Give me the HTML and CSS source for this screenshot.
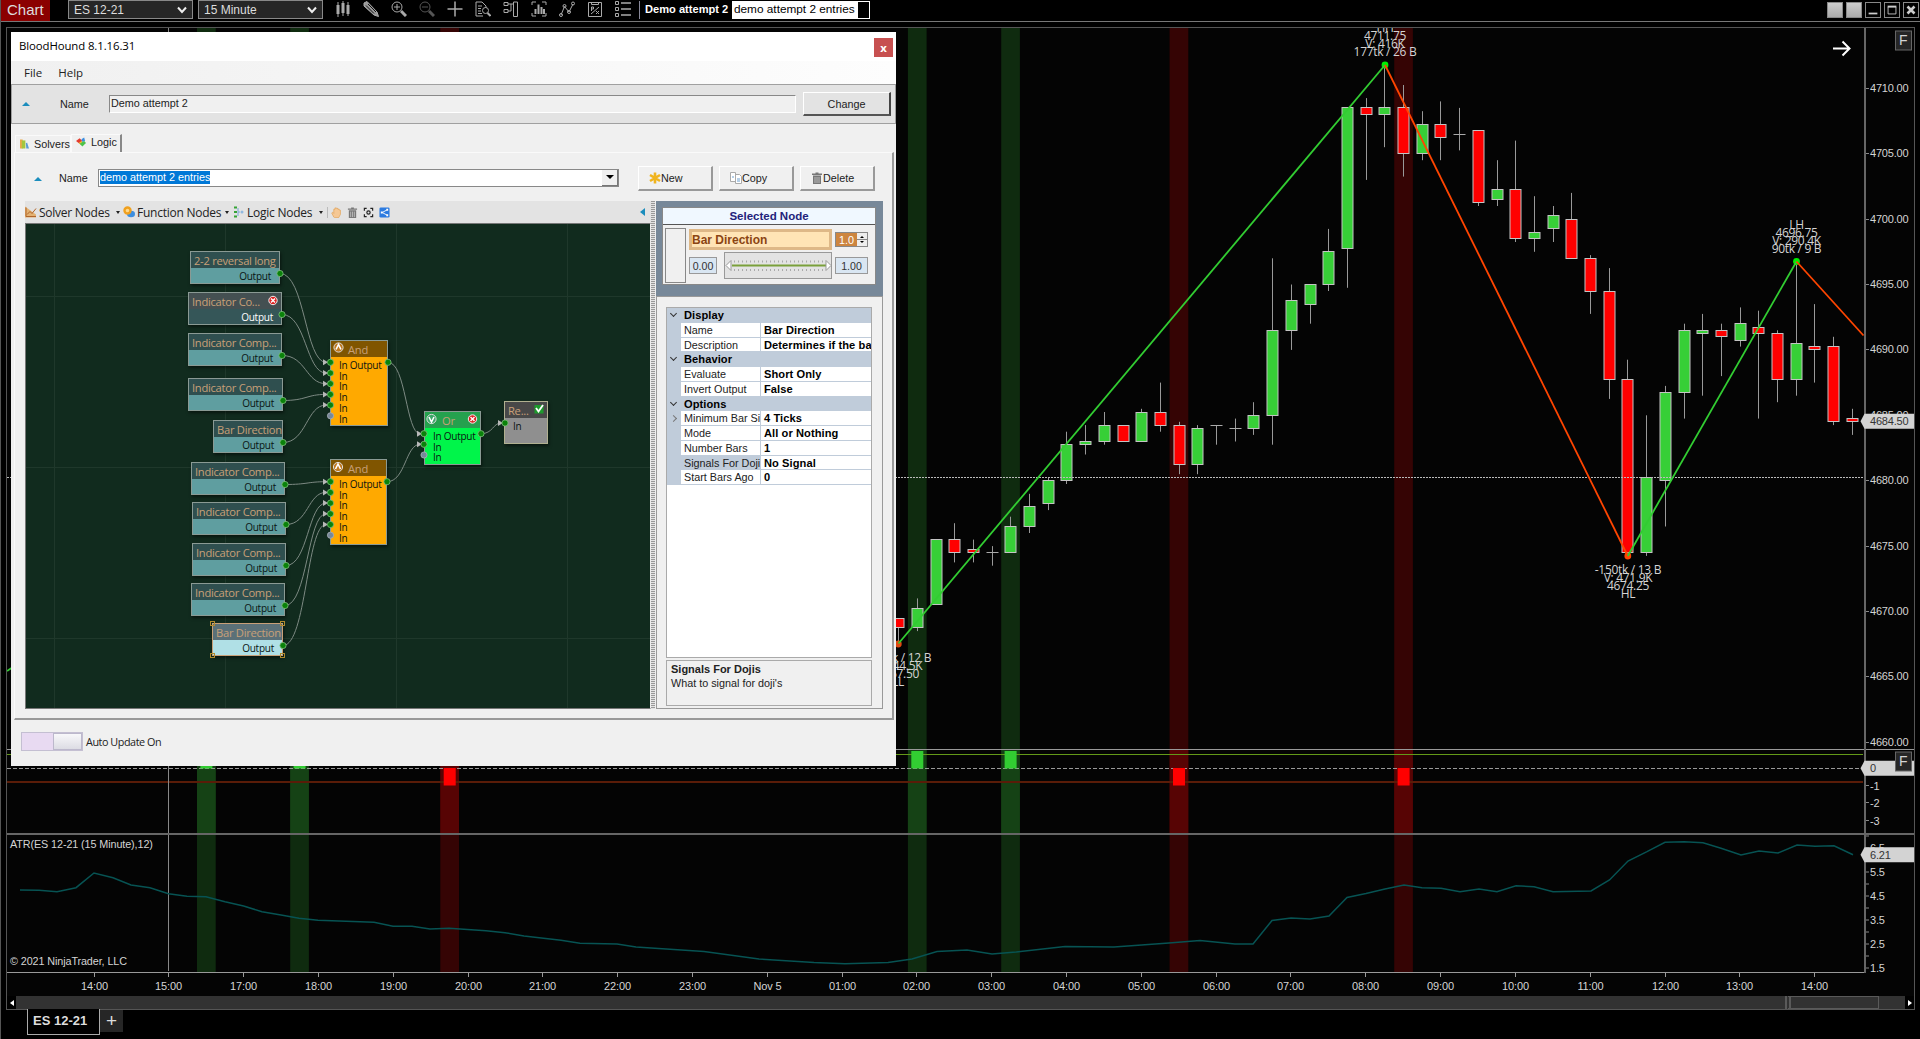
FILE: index.html
```html
<!DOCTYPE html>
<html lang="en">
<head>
  <meta charset="UTF-8">
  <title>Chart - ES 12-21</title>
  <link rel="stylesheet" href="styles.css">
</head>
<body>
  <header class="topbar">
    <div class="brand">Chart</div>
    <div class="dropdown">ES 12-21 <svg viewBox="0 0 10 8"><path d="M1 1.5 5 6 9 1.5"/></svg></div>
    <div class="dropdown">15 Minute <svg viewBox="0 0 10 8"><path d="M1 1.5 5 6 9 1.5"/></svg></div>
    <div class="tools">
      <svg viewBox="0 0 16 16"><path stroke-width="3" d="M3 4v9M8 2v10M13 4v9"/><path d="M3 1v15M8 0v15M13 1v14"/></svg>
      <svg viewBox="0 0 16 16"><path fill="#999" d="M1 2 4 .5 14 11l1.5 4.5L11 14 1 5z"/><path stroke="#111" d="M3 4.5 11 12.5M5 3l8 8"/></svg>
      <svg viewBox="0 0 16 16"><circle cx="6" cy="6" r="5"/><path d="M6 3v6M3 6h6"/><path stroke-width="3" d="m10 10 5 5"/></svg>
      <svg class="dim" viewBox="0 0 16 16"><circle cx="6" cy="6" r="5"/><path d="M3 6h6"/><path stroke-width="3" d="m10 10 5 5"/></svg>
      <svg viewBox="0 0 16 16"><path stroke-width="1.5" d="M8 .5v15M.5 8h15"/></svg>
      <svg viewBox="0 0 16 16"><path d="M8 15H1V1h6l4 4v2M3 5h4M3 7.5h3M3 10h3M3 12.5h4"/><circle cx="10.5" cy="9.5" r="3"/><path stroke-width="2" d="m12.5 12 3 3"/></svg>
      <svg viewBox="0 0 16 16"><path d="M1 1.5h4v3H1zM1 8.5h4v3H1zM5 3h5M8 3v7H5M10.5 1h4v14.5h-4z"/></svg>
      <svg viewBox="0 0 16 16"><path d="M1 4V1h4M11 1h4v3M1 12v3h4M11 15h4v-3"/><path stroke-width="2" d="M4.5 13V8M7.5 13V3.5M10.5 13V6M13 13V8"/></svg>
      <svg viewBox="0 0 16 16"><path d="M2 14 5.5 5.5 10 11l4-8"/><circle cx="2" cy="14" r="1.5"/><circle cx="5.5" cy="5" r="1.5"/><circle cx="10" cy="11" r="1.5"/><circle cx="14" cy="2.5" r="1.5"/></svg>
      <svg viewBox="0 0 16 16"><path d="M1.5 1.5h13v14h-13zM4.5 1v2.5h7V1M4 13l8-7M4.5 6v4M4.5 6h2v2h-2M9 10l3 3M12 10l-3 3"/></svg>
      <svg viewBox="0 0 16 16"><path d="M.5.5h3v3h-3zM.5 6.5h3v3h-3zM.5 12.5h3v3h-3z"/><path stroke-width="1.5" d="M6 2h10M6 8h10M6 14h10"/></svg>
    </div>
    <div class="template"><b>Demo attempt 2</b><span class="entry">demo attempt 2 entries<i></i></span></div>
    <div class="winbtns">
      <i class="blank"></i><i class="blank"></i>
      <svg viewBox="0 0 16 16"><path stroke-width="2" d="M3 12h10"/></svg>
      <svg viewBox="0 0 16 16"><path d="M3.5 4.5h9v8h-9z"/><path stroke-width="2" d="M3 4h10"/></svg>
      <svg viewBox="0 0 16 16"><path stroke-width="3" d="m4 4 8 8M12 4l-8 8"/></svg>
    </div>
  </header>

  <main class="chart-frame">
    <svg id="chart" class="chart" viewBox="7 28 1907 968"></svg>
    <div class="scroll">
      <span class="arrow left"></span>
      <div class="track"><div class="thumb"></div></div>
      <span class="arrow right"></span>
    </div>
  </main>
  <footer class="tabs"><div class="tab">ES 12-21</div><div class="add">+</div></footer>

  <section class="dialog">
    <div class="title"><span>BloodHound 8.1.16.31</span><button class="close">x</button></div>
    <nav class="menu"><span>File</span><span>Help</span></nav>
    <div class="namebar">
      <i class="tri-up"></i>
      <label>Name</label>
      <div class="field">Demo attempt 2</div>
      <button class="btn change">Change</button>
    </div>
    <div class="page-tabs">
      <div class="ptab"><svg viewBox="0 0 10 10"><path fill="#e8a94b" d="M0 0h3v10H0z"/><path fill="#a3c63f" d="M2 1h4v9H2z"/><path fill="#5a9bd5" d="M6.500 4 8 3.500 10 10H7z"/></svg>Solvers</div>
      <div class="ptab active"><svg viewBox="0 0 11 10"><path fill="#e33b2e" d="M0 4 4 1l3 3-3 3z"/><path fill="#3b8ee0" d="M6 2 9 0l1 4-3 1z"/><path fill="#f0c030" d="m3 6 3-2 2 2-3 2z"/><path fill="#4cc24a" d="M4 7l5-3 2 2-4 4z"/></svg>Logic</div>
    </div>
    <div class="page">
      <div class="logic-row">
        <i class="tri-up"></i>
        <label>Name</label>
        <div class="combo"><span>demo attempt 2 entries</span><i></i></div>
        <button class="btn"><svg viewBox="0 0 12 12"><path stroke="#f0b41e" stroke-width="2.600" d="M6 .5v11M1 3l10 6M11 3 1 9"/></svg>New</button>
        <button class="btn"><svg viewBox="0 0 12 12"><path fill="#fff" stroke="#aaa" d="M.5.5h5v9h-5zM5.500 2.500h4l2 2v7h-6z"/><path stroke="#6a9fd0" d="M2 5h2M7 7h3M7 9h3"/></svg>Copy</button>
        <button class="btn"><svg viewBox="0 0 12 12"><path fill="#777" d="M1 1.500h3.500V.5h3v1H11V3H1zM2 3.500h8V12H2z"/><path stroke="#bbb" d="M4 5v6M6 5v6M8 5v6"/></svg>Delete</button>
      </div>
      <div class="split">
        <div class="designer">
          <div class="nodebar">
            <span class="nb solver"><svg viewBox="0 0 12 11"><path fill="#e3b273" d="M0 0 11 8V11H0z"/><path stroke="#b0642a" d="M1 1v9h10M2 8l3-3 2 2 4-5"/></svg>Solver Nodes</span>
            <span class="nb func"><svg viewBox="0 0 12 12"><ellipse cx="8" cy="8" rx="4" ry="3.200" fill="#3b8ee0"/><circle cx="4.500" cy="4.500" r="3" fill="#ffd98a" stroke="#f0a01e" stroke-width="2.400"/></svg>Function Nodes</span>
            <span class="nb logic"><svg viewBox="0 0 10 12"><path stroke="#36a336" stroke-width="2" d="M0 1.500h3M0 6h3M0 10.500h3"/><path stroke="#7aa7d8" d="M4 2v8M4 6h2"/><circle cx="8" cy="6" r="1.500" fill="#8fb8e0"/></svg>Logic Nodes</span>
            <span class="acts">
              <svg viewBox="0 0 12 12"><path fill="#f5c895" stroke="#e0963f" stroke-width=".6" d="M3 11 .8 6.500l1-.8L3 7V2.500h1.300V1h1.600l.2.500h1.500v1H9l.3 1h1V8L8.500 11.500H4z"/></svg>
              <svg viewBox="0 0 12 12"><path fill="#777" d="M1 1.500h3.500V.5h3v1H11V3H1zM2 3.500h8V12H2z"/><path stroke="#bbb" d="M4 5v6M6 5v6M8 5v6"/></svg>
              <svg viewBox="0 0 12 12"><path stroke="#222" stroke-width="1.300" d="M1.500 4V1.500H4M8 1.500h2.500V4M10.500 8v2.500H8M4 10.500H1.500V8"/><circle cx="6" cy="6" r="1.800" stroke="#222" stroke-width="1.300"/></svg>
              <svg viewBox="0 0 12 12"><rect x=".5" y=".5" width="11" height="11" rx="1.500" fill="#2c7be0"/><path stroke="#fff" d="M9 3 3.500 6 9 9"/><path fill="#fff" d="M8 2h2v2H8zM8 8h2v2H8zM2 5h2v2H2z"/></svg>
            </span>
            <i class="collapse"></i>
          </div>
          <div class="canvas" id="canvas"><svg id="wires" viewBox="26 224 624 485"></svg></div>
        </div>
        <div class="splitter"></div>
        <aside class="props">
          <div class="selected">
            <div class="selected-box">
              <h2>Selected Node</h2>
              <div class="selected-body">
                <div class="meter"></div>
                <div class="node-name">Bar Direction</div>
                <div class="spin"><span>1.0</span><i></i></div>
                <div class="val">0.00</div>
                <div class="slider"><svg viewBox="0 0 107 25"><path stroke="#aaa" stroke-width="2" stroke-dasharray="1 3" d="M9 8.500h91M9 17h91"/><path stroke="#7aa03a" stroke-width="2" d="M7 12.500h96"/><path fill="#fff" stroke="#999" d="m1 12.500 5-5v10zM106 12.500l-5-5v10z"/></svg></div>
                <div class="val">1.00</div>
              </div>
            </div>
          </div>
          <div class="grid-panel">
            <div class="grid" id="propGrid"></div>
            <div class="help"><b>Signals For Dojis</b><br>What to signal for doji's</div>
          </div>
        </aside>
      </div>
    </div>
    <div class="status"><div class="toggle"><i></i></div>Auto Update On</div>
  </section>

  <script src="script.js"></script>
</body>
</html>
```
FILE: styles.css
```css
* {
  box-sizing: border-box;
}
body {
  margin: 0;
  height: 1039px;
  overflow: hidden;
  position: relative;
  background: #000;
  border-left: 1px solid #555;
  color: #ddd;
  font-family: "Liberation Sans", Arial, sans-serif;
  font-size: 12px;
}
svg {
  fill: none;
}
button {
  font: inherit;
  padding: 0;
  margin: 0;
}

/* top toolbar */
.topbar {
  display: flex;
  align-items: flex-start;
  height: 22px;
  border-bottom: 1px solid #777;
}
.brand {
  width: 49px;
  height: 21px;
  margin-right: 18px;
  padding-left: 6px;
  background: #8b0000;
  font-size: 15px;
  line-height: 19px;
}
.dropdown {
  display: flex;
  align-items: center;
  justify-content: space-between;
  width: 125px;
  height: 19px;
  margin-right: 5px;
  padding: 0 5px;
  border: 1px solid #888;
  background: #262626;
}
.dropdown svg {
  width: 10px;
  height: 8px;
  stroke: #eee;
  stroke-width: 2;
}
.tools {
  display: flex;
  gap: 12px;
  margin: 1px 8px 0 7px;
}
.tools svg {
  width: 16px;
  height: 16px;
  stroke: #aaa;
}
.tools .dim {
  opacity: 0.5;
}
.template {
  display: flex;
  height: 18px;
  margin-top: 1px;
  padding-left: 5px;
  border-left: 1px solid #889;
  line-height: 17px;
}
.template b {
  width: 87px;
  font-size: 11.1px;
  color: #fff;
}
.entry {
  display: flex;
  width: 138px;
  padding-left: 2px;
  background: #fff;
  color: #000;
  font-size: 11.8px;
  white-space: nowrap;
  justify-content: space-between;
}
.entry i {
  width: 11px;
  margin: 1px;
  background: #000;
}
.winbtns {
  display: flex;
  gap: 3px;
  margin: 2px 1px 0 auto;
}
.winbtns svg, .winbtns i {
  width: 16px;
  height: 16px;
  border: 1px solid #888;
  stroke: #ccc;
}
.winbtns .blank {
  background: linear-gradient(#ccc, #aaa);
}

/* chart */
.chart-frame {
  width: 1909px;
  height: 983px;
  margin: 5px 0 0 5px;
  border: 1px solid #555;
  background: #040404;
}
.chart {
  display: block;
  width: 1907px;
  height: 968px;
}
.chart text {
  fill: #d4d4d4;
  font-size: 11px;
}
.chart .price {
  letter-spacing: -0.2px;
}
.chart .note {
  font-size: 10.8px;
  letter-spacing: -0.1px;
}
.chart .swing {
  font-family: "Open Sans", "Noto Sans", sans-serif;
  font-size: 12px;
  letter-spacing: -0.3px;
  text-anchor: middle;
}
.chart .time {
  letter-spacing: -0.1px;
  text-anchor: middle;
}
.chart .tag {
  fill: #333;
}
.chart .fixed {
  font-size: 14px;
}
.scroll {
  display: flex;
  height: 13px;
}
.track {
  flex: 1;
  background: #323232;
}
.thumb {
  width: 94px;
  height: 13px;
  margin-left: 1769px;
  border: 1px solid #5a5a5a;
  border-left: 6px double #5a5a5a;
}
.arrow {
  display: flex;
  align-items: center;
  justify-content: center;
  width: 9px;
  height: 13px;
  background: #000;
}
.arrow::before {
  content: "";
  border: 3px solid transparent;
}
.arrow.left::before {
  border-right: 4px solid #fff;
  border-left: 0;
}
.arrow.right::before {
  border-left: 4px solid #fff;
  border-right: 0;
}
.tabs {
  display: flex;
  margin: -1px 0 0 26px;
}
.tab {
  width: 73px;
  height: 26px;
  padding-left: 5px;
  border: 1px solid #aaa;
  border-top: 0;
  background: #000;
  font-size: 13px;
  font-weight: bold;
  line-height: 23px;
}
.add {
  width: 23px;
  height: 22px;
  margin-top: 1px;
  background: #262626;
  font-size: 19px;
  line-height: 21px;
  text-align: center;
}

/* BloodHound window */
.dialog {
  position: absolute;
  left: 10px;
  top: 32px;
  width: 885px;
  height: 734px;
  background: #f0f0f0;
  color: #222;
  font-size: 10.8px;
}
.title {
  display: flex;
  justify-content: space-between;
  height: 29px;
  padding: 6px 3px 0 8px;
  background: #fff;
  color: #000;
  font: 11.4px/15px "Open Sans", "Noto Sans", sans-serif;
  letter-spacing: -0.1px;
}
.close {
  width: 19px;
  height: 19px;
  border: 0;
  background: #c75050;
  color: #fff;
  font-weight: bold;
  line-height: 16px;
}
.menu {
  display: flex;
  gap: 16px;
  height: 23px;
  padding: 4px 0 0 13px;
  background: linear-gradient(to right, #f0f0f0, #fdfdfd);
  font: 11.5px/16px "Open Sans", "Noto Sans", sans-serif;
}
.namebar {
  display: flex;
  align-items: center;
  height: 40px;
  padding: 0 4px 0 10px;
  border: 1px solid #a0a0a0;
  background: #e3e3e3;
}
.tri-up {
  border: 4px solid transparent;
  border-top: 0;
  border-bottom: 4px solid #1b8dbd;
}
.namebar label {
  width: 49px;
  margin-left: 30px;
}
.field {
  width: 687px;
  height: 18px;
  padding-left: 1px;
  border: 1px solid #fff;
  border-top-color: #888;
  border-left-color: #888;
  background: #f0f0f0;
  line-height: 15px;
}
.btn {
  display: flex;
  align-items: center;
  width: 75px;
  height: 25px;
  margin-right: 6px;
  padding-left: 10px;
  border: 1px solid #fff;
  border-right: 2px solid #999;
  border-bottom: 2px solid #999;
  background: #f0f0f0;
  color: #222;
}
.btn svg {
  width: 12px;
  height: 12px;
}
.btn.change {
  width: 88px;
  height: 24px;
  margin: 0 0 0 auto;
  justify-content: center;
  padding: 0;
  border-right-color: #444;
  border-bottom-color: #555;
  background: #e3e3e3;
}
.page-tabs {
  display: flex;
  align-items: flex-end;
  height: 28px;
  padding-left: 4px;
}
.ptab {
  display: flex;
  align-items: center;
  gap: 5px;
  width: 56px;
  height: 17px;
  padding: 0 0 1px 4px;
  border: 1px solid #fafafa;
  border-bottom: 0;
}
.ptab svg {
  width: 10px;
  height: 10px;
}
.ptab.active {
  width: 51px;
  height: 18px;
  padding-bottom: 3px;
  border-right: 2px solid #888;
}
.page {
  width: 880px;
  height: 568px;
  margin-left: 3px;
  padding-left: 10px;
  border: 1px solid #fafafa;
  border-right: 2px solid #999;
  border-bottom: 2px solid #999;
}
.logic-row {
  display: flex;
  align-items: center;
  height: 48px;
  padding: 3px 0 0 9px;
}
.logic-row .tri-up {
  margin-top: 1px;
}
.logic-row label {
  width: 39px;
  margin: -1px 0 0 17px;
}
.combo {
  display: flex;
  justify-content: space-between;
  align-items: center;
  width: 521px;
  height: 18px;
  margin: -2px 19px 0 0;
  padding-left: 1px;
  border: 1px solid #888;
  background: #fff;
}
.combo span {
  background: #0078d7;
  color: #fff;
  line-height: 13px;
}
.combo i {
  display: flex;
  align-items: center;
  justify-content: center;
  width: 16px;
  height: 16px;
  border-right: 1px solid #777;
  border-bottom: 1px solid #777;
  background: #f0f0f0;
}
.combo i::before {
  content: "";
  border: 4px solid transparent;
  border-top-color: #000;
  border-bottom: 0;
}
.split {
  display: flex;
  height: 508px;
}
.designer {
  width: 626px;
}
.nodebar {
  display: flex;
  align-items: center;
  height: 22px;
  background: #e3e3e3;
  font: 12px "Open Sans", "Noto Sans", sans-serif;
  letter-spacing: -0.25px;
}
.nb {
  display: flex;
  align-items: center;
  gap: 2px;
  white-space: nowrap;
}
.nb svg {
  width: 12px;
  height: 12px;
}
.nb::after {
  content: "";
  margin-left: auto;
  border: 2px solid transparent;
  border-top: 3px solid #222;
  border-bottom: 0;
}
.nb.solver {
  width: 95px;
  margin-right: 3px;
}
.nb.func {
  width: 106px;
  margin-right: 4px;
}
.nb.logic {
  width: 90px;
}
.acts {
  display: flex;
  gap: 5px;
  margin-left: 4px;
  padding-left: 3px;
  border-left: 1px solid #bbb;
}
.acts svg {
  width: 11px;
  height: 11px;
}
.collapse {
  margin: 0 6px 0 auto;
  border: 4px solid transparent;
  border-right: 5px solid #1b8dbd;
  border-left: 0;
}
.canvas {
  position: relative;
  width: 626px;
  height: 486px;
  border: 1px solid #777;
  border-right-color: #eee;
  background: #112b1e;
  overflow: hidden;
}
.canvas > svg {
  position: absolute;
  left: 0;
  top: 0;
  width: 624px;
  height: 485px;
}
#wires {
  z-index: 2;
}
.node {
  position: absolute;
  border: 1px solid #8a9a94;
  background: #5f9ea0;
  box-shadow: 1px 2px 3px rgba(0, 0, 0, 0.5);
  color: #0a1512;
  font: 10px/10.7px "Open Sans", "Noto Sans", sans-serif;
  letter-spacing: -0.25px;
}
.node .head {
  height: 16px;
  padding-left: 3px;
  background: #2f4f4f;
  color: #c8a078;
  font-size: 11.2px;
  line-height: 17px;
  letter-spacing: -0.28px;
  white-space: nowrap;
}
.node .out {
  padding: 3px 8px 0 0;
  text-align: right;
}
.node.off {
  background: #355658;
  color: #fff;
}
.node.off .head {
  background: #445052;
}
.node.sel {
  background: #b0e0e6;
  border-color: #c8a078;
}
.node.sel .head {
  background: #5a7078;
}
.node.and {
  background: #ffa900;
}
.node.and .head {
  padding-left: 17px;
  background: #805500;
}
.node.or {
  background: #00f54a;
}
.node.or .head {
  padding-left: 17px;
  background: #25a14e;
}
.node.res {
  border-color: #b0b090;
  background: #8f8f8f;
}
.node.res .head {
  background: #484848;
}
.node .ins {
  padding: 3px 0 0 8px;
}
.splitter {
  width: 4px;
  margin-right: 1px;
  background: repeating-linear-gradient(#999 0 1px, #e4e4e4 1px 2px);
}
.props {
  width: 227px;
}
.selected {
  height: 95px;
  padding: 6px 7px 11px 6px;
  background: #778899;
}
.selected-box {
  height: 78px;
  border: 1px solid #888;
  background: #f0f0f0;
}
.selected h2 {
  margin: 0;
  height: 17px;
  border-bottom: 1px solid #555;
  background: #f0f8ff;
  color: #22227a;
  font-size: 11.5px;
  line-height: 16px;
  text-align: center;
}
.selected-body {
  display: grid;
  grid-template-columns: 21px 28px 112px 33px;
  grid-template-rows: 23px 27px;
  column-gap: 3px;
  row-gap: 1px;
  align-items: center;
  padding: 3px 0 0 2px;
}
.meter {
  grid-row: 1 / 3;
  height: 55px;
  margin-top: 3px;
  border: 1px solid #888;
}
.node-name {
  grid-column: 2 / 4;
  height: 21px;
  border: 3px solid #deb887;
  background: #ffe4b5;
  color: #8b4513;
  font-size: 12px;
  font-weight: bold;
  line-height: 16px;
}
.spin {
  display: flex;
  height: 15px;
  border: 1px solid #888;
}
.spin span {
  flex: 1;
  background: #cd853f;
  color: #fff;
  text-align: center;
  line-height: 15px;
}
.spin i {
  display: flex;
  flex-direction: column;
  align-items: center;
  justify-content: space-evenly;
  width: 10px;
  background: linear-gradient(#eee 46%, #888 46% 54%, #eee 54%);
}
.spin i::before, .spin i::after {
  content: "";
  border: 2px solid transparent;
  border-top: 0;
  border-bottom-color: #000;
}
.spin i::after {
  transform: rotate(180deg);
}
.val {
  height: 17px;
  border: 1px solid #999;
  background: #d9e6f2;
  color: #333;
  font-size: 10.6px;
  line-height: 16px;
  text-align: center;
}
.slider {
  margin: 0 0 0 4px;
  height: 27px;
  border: 1px solid #999;
  background: #e3e3e3;
}
.slider svg {
  display: block;
  width: 107px;
  height: 25px;
}
.grid-panel {
  height: 413px;
  padding: 10px 10px 0 9px;
  border: 1px solid #999;
}
.grid {
  height: 351px;
  border: 1px solid #aaa;
  background: #fff;
}
.row {
  display: grid;
  grid-template-columns: 14px 79px 1fr;
  height: 14.75px;
  line-height: 15px;
  background: #c0ccda;
}
.row span, .row b {
  padding-left: 3px;
  border-bottom: 1px solid #c0ccda;
  background: #fff;
  white-space: nowrap;
  overflow: hidden;
}
.row b {
  border-left: 1px solid #c0ccda;
  font-size: 11.1px;
  letter-spacing: 0.08px;
  color: #000;
}
.row.cat b {
  grid-column: 2 / 4;
  border: 0;
  background: none;
}
.row.picked span {
  background: #c0ccda;
}
.row i {
  width: 5px;
  height: 5px;
  margin: 3px 0 0 4px;
  border: solid #333;
  border-width: 0 1px 1px 0;
  transform: rotate(45deg);
}
.row i.more {
  margin-top: 5px;
  border-color: #777;
  transform: rotate(-45deg);
}
.row i.none {
  border: 0;
}
.help {
  height: 46px;
  margin-top: 2px;
  padding: 1px 4px;
  border: 1px solid #aaa;
  line-height: 14px;
}
.help b {
  font-size: 11px;
}
.status {
  display: flex;
  align-items: center;
  gap: 3px;
  padding: 12px 0 0 10px;
  font: 10.8px/17px "Open Sans", "Noto Sans", sans-serif;
  letter-spacing: -0.45px;
}
.toggle {
  width: 62px;
  height: 19px;
  border: 1px solid #c4bfd2;
  background: #e8daf2;
}
.toggle i {
  display: block;
  width: 29px;
  height: 17px;
  margin-left: 31px;
  border: 1px solid #bcb8cc;
  background: linear-gradient(#f8f8fa, #dcdce4);
}
```
FILE: script.js
```js
const STEP = 18.7;      // pixels per 15 minute bar
const LAST_X = 1852.3;  // x of the newest bar
const priceY = p => 88.3 + (4710 - p) * 13.08;
const barX = fromEnd => LAST_X - fromEnd * STEP;

// open, high, low, close
const bars = [
  [4669.5, 4669.5, 4667.5, 4668.75], [4668.75, 4671, 4668.5, 4670.25], [4670.5, 4675.5, 4670.5, 4675.5],
  [4675.5, 4676.75, 4673.75, 4674.5], [4674.75, 4675.5, 4673.75, 4674.5], [4674.5, 4675, 4673.5, 4674.5],
  [4674.5, 4677.25, 4674.5, 4676.5], [4676.5, 4679, 4676, 4678], [4678.25, 4680.25, 4677.75, 4680],
  [4680, 4683.75, 4679.75, 4682.75], [4682.75, 4684.25, 4682, 4683], [4683, 4685.25, 4682.75, 4684.25],
  [4684.25, 4684.25, 4683, 4683], [4683, 4685.5, 4683, 4685.25], [4685.25, 4687.5, 4683.75, 4684.25],
  [4684.25, 4684.5, 4680.5, 4681.25], [4681.25, 4684.25, 4680.5, 4684], [4684.25, 4684.25, 4682.75, 4684.25],
  [4684, 4684.75, 4683, 4684], [4684, 4686, 4683.5, 4685], [4685, 4697, 4682.75, 4691.5],
  [4691.5, 4695, 4690, 4693.75], [4693.5, 4695, 4692, 4695], [4695, 4699.25, 4694.5, 4697.5],
  [4697.75, 4708.5, 4694.75, 4708.5], [4708.5, 4709.25, 4703, 4708], [4708, 4711.75, 4705.5, 4708.5],
  [4708.5, 4710.25, 4703.25, 4705], [4705, 4708.25, 4704.5, 4707.25], [4707.25, 4709, 4704.5, 4706.25],
  [4706.5, 4708.5, 4705.25, 4706.5], [4706.75, 4706.75, 4701, 4701.25], [4701.5, 4704.5, 4701, 4702.25],
  [4702.25, 4706, 4698.25, 4698.5], [4698.5, 4701.75, 4697.5, 4699], [4699.25, 4701, 4698.25, 4700.25],
  [4700, 4702, 4697, 4697], [4697, 4697.25, 4692.75, 4694.5], [4694.5, 4696.25, 4686.25, 4687.75],
  [4687.75, 4689.25, 4674.25, 4674.5], [4674.5, 4685, 4674.25, 4680.25], [4680, 4687.25, 4676.5, 4686.75],
  [4686.75, 4692, 4684.75, 4691.5], [4691.25, 4692.75, 4686.5, 4691.5], [4691.5, 4692, 4688, 4691],
  [4690.75, 4693.25, 4690.25, 4692], [4691.75, 4693, 4684.75, 4691.25], [4691.25, 4691.5, 4686, 4687.75],
  [4687.75, 4696.75, 4686.5, 4690.5], [4690.25, 4693.5, 4687.5, 4690], [4690.25, 4691, 4684.25, 4684.5],
  [4684.75, 4685.5, 4683.5, 4684.5]
];

// signal bars: x, is long
const signals = [
  [206.4, true], [299.6, true], [449.7, false], [917.3, true], [1010.6, true], [1179, false], [1403.6, false]
];

const atr = [
  [20, 890], [39, 890.3], [57, 891.7], [76, 887.7], [94, 873], [113, 877.7], [131, 885], [150, 887.7], [168.5, 893.7],
  [187, 896.3], [206, 896.7], [225, 901.7], [243.6, 906], [262, 911.7], [281, 915], [299, 918.3], [318, 920.3],
  [374, 922.3], [393, 926.3], [412, 926.3], [430, 929], [449, 928.3], [486, 930.7], [505, 932.7], [524, 936],
  [561, 940.3], [580, 943.3], [617, 944], [636, 947], [704, 951.5], [759, 959], [814, 962.5], [845, 963.7],
  [888, 962.5], [912, 959], [937, 951.5], [967, 950], [992, 954], [1016, 952], [1065, 946.5], [1114, 947],
  [1169, 943], [1200, 940.5], [1235, 944], [1253, 944], [1272, 920.5], [1291, 918], [1310, 919], [1329, 916],
  [1347, 897.5], [1366, 893.5], [1385, 889], [1404, 885], [1422, 887.7], [1441, 888.3], [1460, 891.7], [1479, 889],
  [1497, 891.7], [1516, 885.7], [1534, 886.7], [1553, 891.7], [1591, 891], [1609.5, 880], [1628, 861], [1647, 851.7],
  [1665, 842.3], [1684, 841.7], [1703, 842.7], [1721, 848.3], [1741, 855], [1759, 851], [1778, 853], [1797, 845],
  [1815, 846.3], [1834, 845.7], [1853, 854.7]
];

let out = '';
const rect = (x, y, w, h, fill, extra = '') => {
  out += `<rect x="${x}" y="${y}" width="${w}" height="${h}" fill="${fill}" ${extra}/>`;
};
const line = (x1, y1, x2, y2, stroke, extra = '') => {
  out += `<path d="M${x1} ${y1}L${x2} ${y2}" stroke="${stroke}" ${extra}/>`;
};
const text = (x, y, s, cls) => {
  out += `<text x="${x}" y="${y}" class="${cls}">${s}</text>`;
};

// signal bands, brighter inside the signal panel
signals.forEach(([x, up]) => {
  rect(x - 9.4, 28, 18.7, 945, up ? '#0f2b0f' : '#350404');
  rect(x - 9.4, 750, 18.7, 83, up ? '#154215' : '#570404');
});

// panels and guide lines
line(7, 749.5, 1914, 749.5, '#999');
line(7, 754.5, 1863, 754.5, '#649a18');
line(7, 782, 1863, 782, '#5a1c08', 'stroke-width="2"');
line(7, 768.5, 1863, 768.5, '#999', 'stroke-dasharray="4 2"');
line(168.5, 28, 168.5, 971, '#888');
signals.forEach(([x, up]) => {
  rect(x - 6, up ? 751 : 768, 12, 17.5, up ? '#32cd32' : '#f00');
});

// candles
bars.forEach(([o, h, l, c], i) => {
  const x = Math.floor(barX(bars.length - 1 - i)) + .5;
  line(x, priceY(h).toFixed(1), x, priceY(l).toFixed(1), '#999');
  const top = Math.floor(priceY(Math.max(o, c))) + .5;
  const bottom = Math.floor(priceY(Math.min(o, c))) + .5;
  if (o === c) {
    line(x - 6, top, x + 6, top, '#aaa');
  } else {
    rect(x - 5.5, top, 11, bottom - top, c > o ? '#37cf37' : '#f00', 'stroke="#c4c4c4"');
  }
});
line(7, 477.5, 1863, 477.5, '#bbb', 'stroke-dasharray="2 1"');

// swing lines
const dotAt = (x, y, color) => { out += `<circle cx="${x}" cy="${y}" r="3.4" fill="${color}"/>`; };
const swing = (x1, y1, x2, y2, color) => line(x1, y1, x2, y2, color, 'stroke-width="1.8"');
dotAt(898.3, 644, '#e04810');
dotAt(1385, 65, '#0e0');
dotAt(1627.8, 556, '#ff4500');
dotAt(1796.5, 261.5, '#0e0');
swing(7, 671, 13, 667, '#32cd32');
swing(898.5, 643.5, 1385, 65, '#32cd32');
swing(1385, 65, 1627.8, 556, '#ff4500');
swing(1627.8, 556, 1796.5, 261.5, '#32cd32');
swing(1796.5, 261.5, 1863.5, 335.5, '#ff4500');

const swings = [
  [898, 662, ['-100tk / 12 B', 'V: 144.5K', '4667.50', 'LL']],
  [1385, 32, ['HH', '4711.75', 'V: 416K', '177tk / 26 B']],
  [1796.5, 229, ['LH', '4696.75', 'V: 290.4K', '90tk / 9 B']],
  [1628, 574, ['-150tk / 13 B', 'V: 471.9K', '4674.25', 'HL']]
];
swings.forEach(([x, y, rows]) => rows.forEach((s, i) => text(x, y + i * 8, s, 'swing')));

// average true range
out += `<path d="M${atr.join(' ')}" stroke="#075353" stroke-width="1.5"/>`;
line(7, 834, 1914, 834, '#666', 'stroke-width="2"');
line(7, 972.5, 1865, 972.5, '#999');
line(1865, 28, 1865, 973, '#666', 'stroke-width="2"');
text(10, 847.5, 'ATR(ES 12-21 (15 Minute),12)', 'note');
text(10, 965, '© 2021 NinjaTrader, LLC', 'note');

// axes
for (let p = 4710; p >= 4660; p -= 5) {
  const y = Math.floor(priceY(p)) + .5;
  line(1866, y, 1869, y, '#888');
  text(1870, y + 3.5, p.toFixed(2), 'price');
}
['-1', '-2', '-3'].forEach((s, i) => {
  const y = Math.round(785 + i * 17.3) + .5;
  line(1866, y, 1869, y, '#888');
  text(1870, y + 4, s, 'price');
});
for (let i = 0; i < 12; i++) line(1866, 836 + i * 12, 1869, 836 + i * 12, '#888');
for (let i = 0; i < 6; i++) text(1870, 852 + i * 24, (6.5 - i).toFixed(1), 'price');
const times = '14:00,15:00,17:00,18:00,19:00,20:00,21:00,22:00,23:00,Nov 5,01:00,02:00,03:00,04:00,05:00,06:00,07:00,08:00,09:00,10:00,11:00,12:00,13:00,14:00'.split(',');
times.forEach((t, i) => {
  const x = Math.floor(94 + i * 74.81) + .5;
  line(x, 973, x, 977, '#999');
  text(x, 990, t, 'time');
});

// value tags
[[421.3, '4684.50'], [768.3, '0'], [854.7, '6.21']].forEach(([y, s]) => {
  out += `<path d="M1860.5 ${y}l4-7.5h49.5v15h-49.5z" fill="#d3d3d3"/>`;
  text(1870, y + 4, s, 'tag price');
});
[31, 752].forEach(y => {
  rect(1895.5, y, 16, 19, '#262626', 'stroke="#666"');
  text(1899, y + 14, 'F', 'fixed');
});
out += '<path d="M1833 48.5h17M1842.5 41.5l7 7-7 7" stroke="#fff" stroke-width="2"/>';
document.getElementById('chart').innerHTML = out;

// logic nodes: class, x, y, width, name, height, inputs
const nodes = [
  ['', 190, 251, 90, '2-2 reversal long'], ['off', 188, 292, 94, 'Indicator Co...'], ['', 188, 333, 94, 'Indicator Comp...'],
  ['', 188, 378, 95, 'Indicator Comp...'], ['', 213, 420, 70, 'Bar Direction'], ['', 191, 462, 94, 'Indicator Comp...'],
  ['', 192, 502, 94, 'Indicator Comp...'], ['', 192, 543, 94, 'Indicator Comp...'], ['', 191, 583, 94, 'Indicator Comp...'],
  ['sel', 212, 623, 71, 'Bar Direction'],
  ['and', 330, 340, 58, 'And', 86, 6], ['and', 330, 459, 57, 'And', 86, 6],
  ['or', 424, 411, 57, 'Or', 54, 3], ['res', 504, 401, 44, 'Re...', 43, 1]
];
const canvas = document.getElementById('canvas');
nodes.forEach(([cls, x, y, w, name, h = 33, ins]) => {
  let body = '<div class="out">Output</div>';
  if (ins) {
    const rows = Array(ins).fill('In');
    if (cls !== 'res') rows[0] = 'In Output';
    body = `<div class="ins">${rows.join('<br>')}</div>`;
  }
  canvas.insertAdjacentHTML('beforeend',
    `<div class="node ${cls}" style="left:${x - 26}px;top:${y - 224}px;width:${w}px;height:${h}px"><div class="head">${name}</div>${body}</div>`);
});

let lines = '';
[54.5, 225.5, 396.5, 567.5].forEach(x => { lines += `<path d="M${x} 223v486" stroke="#1f382b"/>`; });
[296.5, 467.5, 638.5].forEach(y => { lines += `<path d="M25 ${y}h626" stroke="#1f382b"/>`; });
canvas.insertAdjacentHTML('afterbegin', `<svg viewBox="26 224 624 485">${lines}</svg>`);

let wires = '';
const dot = (x, y, on = true) => {
  wires += `<circle cx="${x}" cy="${y}" r="3.1" fill="${on ? '#0a820a' : '#778899'}" stroke="${on ? '#7fbf7f' : '#a9b0b8'}" stroke-width=".8"/>`;
};
const wire = (x1, y1, x2, y2) => {
  const m = (x1 + x2) / 2;
  wires += `<path d="M${x1} ${y1}C${m} ${y1} ${m} ${y2} ${x2 - 4} ${y2}" stroke="#7d8a83"/>`;
  wires += `<path d="M${x2 - 7} ${y2 - 3}l5 3-5 3z" fill="#b8b8b8"/>`;
};
nodes.slice(0, 10).forEach(([, x, y, width], i) => {
  wire(x + width, y + 22.5, 330, (i < 5 ? 362.3 : 481.7) + (i % 5) * 10.7);
  dot(x + width, y + 22.5);
});
[362.3, 481.7].forEach(y => {
  for (let i = 0; i < 6; i++) dot(330.5, y + i * 10.7, i < 5);
});
wire(388, 362.3, 424, 433.7);
wire(387, 481.7, 424, 444.3);
wire(481, 433.7, 505, 423);
[[388, 362.3], [387, 481.7], [424, 433.7], [424, 444.3], [481, 433.7], [505, 423]].forEach(([x, y]) => dot(x, y));
dot(424, 455, false);

// node badges
[[273, 300.5], [472.5, 419]].forEach(([x, y]) => {
  wires += `<circle cx="${x}" cy="${y}" r="4.2" fill="#d22" stroke="#eee"/><path d="M${x - 2} ${y - 2}l4 4m0-4l-4 4" stroke="#fff" stroke-width="1.4"/>`;
});
[
  [338.5, 347.5, '#c07a20', 'M-2.5 2 0-3 2.5 2'],
  [338, 467, '#c07a20', 'M-2.5 2 0-3 2.5 2'],
  [431.5, 419, '#3aa868', 'M-2.5-2 0 3 2.5-2']
].forEach(([x, y, c, d]) => {
  wires += `<g transform="translate(${x} ${y})"><circle r="4.6" fill="${c}" stroke="#ddd"/><path d="${d}" stroke="#fff" stroke-width="1.6"/></g>`;
});
wires += '<rect x="534.5" y="405" width="9" height="8.5" fill="#1d9a2c"/><path d="m536 408 2.5 3.5L543 405" stroke="#fff" stroke-width="1.8"/>';
[[212.5, 623.5], [282.5, 623.5], [212.5, 655.5], [282.5, 655.5]].forEach(([x, y]) => {
  wires += `<rect x="${x - 2}" y="${y - 2}" width="4" height="4" stroke="#b08a2e"/>`;
});
document.getElementById('wires').innerHTML = wires;

// property grid
const props = [
  ['Display'], ['Name', 'Bar Direction'], ['Description', 'Determines if the bar direction'],
  ['Behavior'], ['Evaluate', 'Short Only'], ['Invert Output', 'False'],
  ['Options'], ['Minimum Bar Size', '4 Ticks', 'more'], ['Mode', 'All or Nothing'], ['Number Bars', '1'],
  ['Signals For Dojis', 'No Signal', 'picked'], ['Start Bars Ago', '0']
];
document.getElementById('propGrid').innerHTML = props.map(([name, value, flag]) =>
  value === undefined
    ? `<div class="row cat"><i></i><b>${name}</b></div>`
    : `<div class="row ${flag === 'picked' ? flag : ''}"><i class="${flag === 'more' ? 'more' : 'none'}"></i><span>${name}</span><b>${value}</b></div>`
).join('');
```
